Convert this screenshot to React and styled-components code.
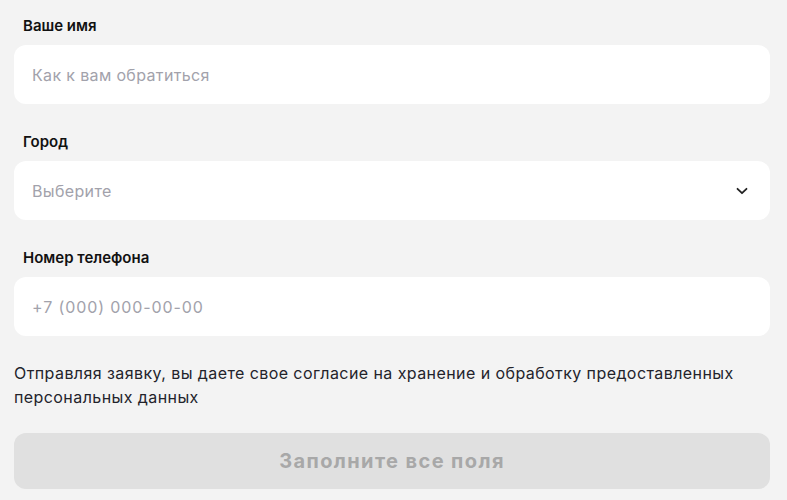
import React from "react";
import styled, { createGlobalStyle } from "styled-components";

const Global = createGlobalStyle`
  html, body { margin: 0; padding: 0; background: #f3f3f3; }
  body { font-family: Inter, "Noto Sans", sans-serif; -webkit-font-smoothing: antialiased; }
  * { box-sizing: border-box; }
`;

const Form = styled.form`
  display: flex;
  flex-direction: column;
  padding: 16px 17px 12px 14px;
  width: 787px;
`;

const Field = styled.div`
  display: flex;
  flex-direction: column;
  gap: 9px;
  margin-bottom: 28px;
`;

const Label = styled.label`
  padding-left: 9px;
  font-size: 15px;
  line-height: 20px;
  font-weight: 600;
  color: #111;
`;

const Box = styled.div`
  display: flex;
  align-items: center;
  justify-content: space-between;
  height: 59px;
  padding: 0 22px 0 18px;
  background: #fff;
  border-radius: 12px;
`;

const Input = styled.input`
  border: none;
  outline: none;
  background: transparent;
  flex: 1;
  font-family: inherit;
  font-size: 16px;
  letter-spacing: ${(p) => p.$spacing || "0.35px"};
  color: #222;
  padding: 0;
  &::placeholder { color: #a2a2ab; }
`;

const Placeholder = styled.span`
  font-size: 16px;
  letter-spacing: 0.35px;
  color: #a2a2ab;
`;

const Consent = styled.p`
  margin: -3px 0 24px;
  font-size: 16px;
  line-height: 24px;
  letter-spacing: 0.42px;
  color: #23232b;
`;

const Submit = styled.button`
  height: 56px;
  border: none;
  border-radius: 12px;
  background: #e0e0e0;
  color: #a8a8a8;
  font-family: inherit;
  font-size: 20px;
  letter-spacing: 1.4px;
  font-weight: 700;
  cursor: default;
`;

const Chevron = () => (
  <svg width="12" height="8" viewBox="0 0 12 8" fill="none">
    <path d="M1.5 1.8L6 6.2L10.5 1.8" stroke="#222" strokeWidth="1.8" strokeLinecap="round" strokeLinejoin="round" />
  </svg>
);

export default function App() {
  return (
    <>
      <Global />
      <Form onSubmit={(e) => e.preventDefault()}>
        <Field>
          <Label>Ваше имя</Label>
          <Box>
            <Input placeholder="Как к вам обратиться" />
          </Box>
        </Field>
        <Field>
          <Label>Город</Label>
          <Box>
            <Placeholder>Выберите</Placeholder>
            <Chevron />
          </Box>
        </Field>
        <Field>
          <Label>Номер телефона</Label>
          <Box>
            <Input placeholder="+7 (000) 000-00-00" $spacing="0.9px" />
          </Box>
        </Field>
        <Consent>
          Отправляя заявку, вы даете свое согласие на хранение и обработку предоставленных персональных данных
        </Consent>
        <Submit type="button" disabled>Заполните все поля</Submit>
      </Form>
    </>
  );
}
